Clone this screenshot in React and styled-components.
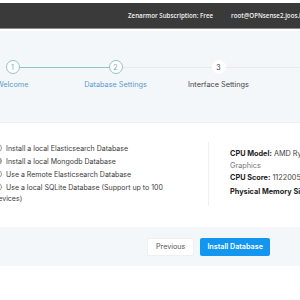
import React from "react"
import styled, { createGlobalStyle } from "styled-components"

const GlobalStyle = createGlobalStyle`
  html, body { margin: 0; padding: 0; background: #ffffff; }
  body { font-family: Inter, "Noto Sans", sans-serif; overflow: hidden; }
`

const steps = [
  { n: 1, label: "Welcome", state: "done" },
  { n: 2, label: "Database Settings", state: "active" },
  { n: 3, label: "Interface Settings", state: "todo" },
  { n: 4, label: "Setup", state: "todo" },
]

const options = [
  { text: "Install a local Elasticsearch Database", checked: false },
  { text: "Install a local Mongodb Database", checked: true },
  { text: "Use a Remote Elasticsearch Database", checked: false },
  { text: "Use a local SQLite Database (Support up to 100 devices)", checked: false },
]

export default function App() {
  return (
    <Page>
      <GlobalStyle />
      <TopBar>
        <TopText>Zenarmor Subscription: Free</TopText>
        <TopText>root@OPNsense2.joos.in</TopText>
      </TopBar>
      <Stage>
        <Stepper>
          {steps.map((s, i) => (
            <Step key={s.n}>
              <Track>
                <Line $hidden={i === 0} $on={s.state !== "todo"} />
                <Circle $state={s.state}>{s.n}</Circle>
                <Line $hidden={i === steps.length - 1} $on={s.state === "done"} />
              </Track>
              <StepLabel $on={s.state !== "todo"}>{s.label}</StepLabel>
            </Step>
          ))}
        </Stepper>
      </Stage>
      <Card>
        <Options>
          {options.map((o) => (
            <Option key={o.text}>
              <Radio $checked={o.checked} />
              {o.text}
            </Option>
          ))}
        </Options>
        <Divider />
        <Info>
          <InfoLine><b>CPU Model:</b> AMD Ryzen 7 PRO 4750U with Radeon</InfoLine>
          <InfoSub>Graphics</InfoSub>
          <InfoLine><b>CPU Score:</b> 1122005</InfoLine>
          <InfoLine $gap><b>Physical Memory Size:</b> 16 GB</InfoLine>
        </Info>
      </Card>
      <Footer>
        <GhostButton>Previous</GhostButton>
        <PrimaryButton>Install Database</PrimaryButton>
      </Footer>
    </Page>
  )
}

const Page = styled.div`
  width: 300px;
  height: 300px;
  overflow: hidden;
  padding-top: 3px;
  box-sizing: border-box;
`

const TopBar = styled.div`
  height: 25px;
  background: #3a3a3a;
  border-bottom: 1px solid #8a8a88;
  display: flex;
  align-items: center;
  padding-left: 128px;
  gap: 18px;
  white-space: nowrap;
`

const TopText = styled.span`
  font-family: "Open Sans", sans-serif;
  font-size: 6.2px;
  font-weight: 600;
  color: #f2f2f2;
`

const Stage = styled.div`
  margin-top: 2px;
  height: 91px;
  background: #f4f7fa;
  padding-top: 28px;
  box-sizing: border-box;
`

const Stepper = styled.div`
  display: flex;
  margin-left: -39px;
  width: 420px;
`

const Step = styled.div`
  width: 103px;
  flex: none;
  display: flex;
  flex-direction: column;
  align-items: center;
`

const Track = styled.div`
  width: 100%;
  display: flex;
  align-items: center;
  height: 16px;
`

const Line = styled.div`
  flex: 1;
  height: 1px;
  background: ${(p) => (p.$hidden ? "transparent" : p.$on ? "#8ec5c5" : "#e6eaee")};
`

const Circle = styled.div`
  width: 14px;
  height: 14px;
  border-radius: 50%;
  flex: none;
  box-sizing: border-box;
  border: 1px solid ${(p) => (p.$state === "todo" ? "#ffffff" : "#8ec5c5")};
  background: #ffffff;
  color: ${(p) => (p.$state === "todo" ? "#333" : "#7aaac8")};
  font-size: 7px;
  display: flex;
  align-items: center;
  justify-content: center;
`

const StepLabel = styled.div`
  margin-top: 5px;
  font-size: 7.3px;
  white-space: nowrap;
  color: ${(p) => (p.$on ? "#5b9acb" : "#444")};
`

const Card = styled.div`
  height: 105px;
  background: #ffffff;
  border-top: 1px solid #eef1f4;
  display: flex;
  align-items: flex-start;
  padding-top: 19px;
  box-sizing: border-box;
`

const Options = styled.div`
  width: 170px;
  margin-left: -6px;
  margin-right: 44px;
  padding-top: 2px;
  display: flex;
  flex-direction: column;
  gap: 2.5px;
  flex: none;
`

const Option = styled.label`
  display: block;
  font-size: 7px;
  line-height: 10.5px;
  color: #3a3a3a;
`

const Radio = styled.span`
  display: inline-block;
  vertical-align: -1px;
  width: 6px;
  height: 6px;
  margin-right: 4px;
  border-radius: 50%;
  border: 1px solid #9a9a9a;
  background: ${(p) => (p.$checked ? "#b8b8b8" : "#fff")};
`

const Divider = styled.div`
  width: 1px;
  height: 64px;
  background: #eef0f2;
  flex: none;
`

const Info = styled.div`
  margin-left: 21px;
  padding-top: 6px;
  display: flex;
  flex-direction: column;
  white-space: nowrap;
  font-size: 7.3px;
  color: #444;
`

const InfoLine = styled.div`
  line-height: 11px;
  margin-top: ${(p) => (p.$gap ? "3px" : "0")};
  & b { color: #222; font-weight: 700; }
`

const InfoSub = styled.div`
  line-height: 13px;
  color: #777;
`

const Footer = styled.div`
  height: 39px;
  background: #f4f7fa;
  display: flex;
  align-items: center;
  padding-left: 147px;
  gap: 6px;
`

const GhostButton = styled.button`
  height: 18px;
  padding: 0 8px;
  border: 1px solid #eef0f2;
  border-radius: 2px;
  background: #ffffff;
  color: #555;
  font-family: Inter, sans-serif;
  font-size: 7.2px;
`

const PrimaryButton = styled.button`
  height: 18px;
  padding: 0 7px;
  border: none;
  border-radius: 2px;
  background: #1396f0;
  color: #ffffff;
  font-family: Inter, sans-serif;
  font-size: 7.2px;
  font-weight: 600;
`
